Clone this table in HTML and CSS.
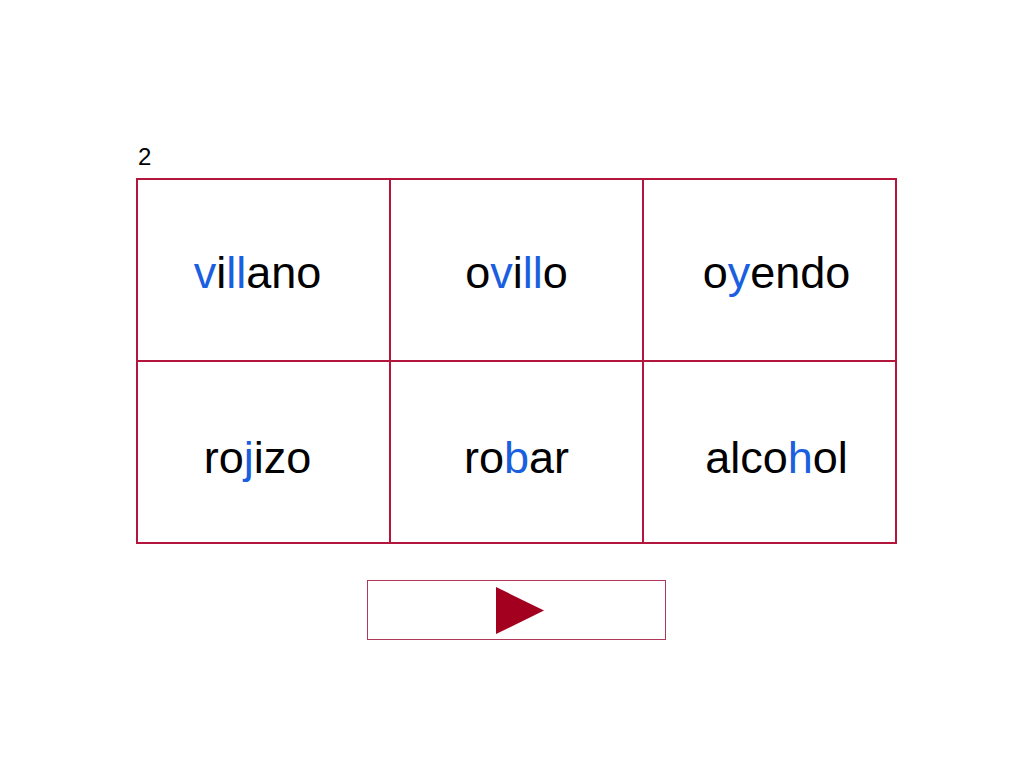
FILE: index.html
```html
<!DOCTYPE html>
<html lang="es">
<head>
<meta charset="utf-8">
<title>2</title>
<link rel="stylesheet" href="styles.css">
</head>
<body>
<main class="page">
  <div class="num">2</div>
  <div class="grid">
    <div class="cell c1"><span class="hl">v</span>i<span class="hl">ll</span>ano</div>
    <div class="cell c2">o<span class="hl">v</span>i<span class="hl">ll</span>o</div>
    <div class="cell c3">o<span class="hl">y</span>endo</div>
    <div class="cell c1 r2">ro<span class="hl">j</span>izo</div>
    <div class="cell c2 r2">ro<span class="hl">b</span>ar</div>
    <div class="cell c3 r2">alco<span class="hl">h</span>ol</div>
  </div>
  <div class="btn-row">
    <button class="play" type="button" aria-label="Siguiente">
      <svg width="48" height="47" viewBox="0 0 48 47"><polygon points="0,0 48,23.5 0,47" fill="#a3001f"/></svg>
    </button>
  </div>
</main>
</body>
</html>
```
FILE: styles.css
```css
html, body {
  margin: 0;
  padding: 0;
  background: #ffffff;
}
body {
  font-family: "Liberation Sans", Arial, sans-serif;
  color: #000;
}
.page {
  width: 1024px;
  height: 768px;
  padding-top: 143px;
  box-sizing: border-box;
}
.num {
  margin-left: 138px;
  font-size: 24px;
  line-height: 28px;
  height: 35px;
}
.grid {
  margin-left: 136px;
  width: 761px;
  height: 366px;
  box-sizing: border-box;
  display: grid;
  grid-template-columns: 253px 253px 253px;
  grid-template-rows: 182px 182px;
  border-top: 2px solid #b3153d;
  border-left: 2px solid #b3153d;
}
.cell {
  border-right: 2px solid #b3153d;
  border-bottom: 2px solid #b3153d;
  display: flex;
  align-items: center;
  justify-content: center;
  font-size: 45px;
  padding-top: 6px;
  box-sizing: border-box;
  color: #000;
}
.cell.r2 {
  padding-top: 12px;
}
.c1 { padding-right: 12px; }
.c3 { padding-left: 14px; }
.hl { color: #1a5fe0; }
.btn-row {
  display: flex;
  justify-content: center;
  margin-top: 36px;
  padding-left: 9px;
  width: 1024px;
  box-sizing: border-box;
}
.play {
  width: 299px;
  height: 60px;
  border: 1px solid #b0385a;
  background: #fff;
  padding: 0;
  display: flex;
  align-items: center;
  justify-content: center;
  padding-left: 7px;
  box-sizing: border-box;
}
.play svg { display: block; }
```
